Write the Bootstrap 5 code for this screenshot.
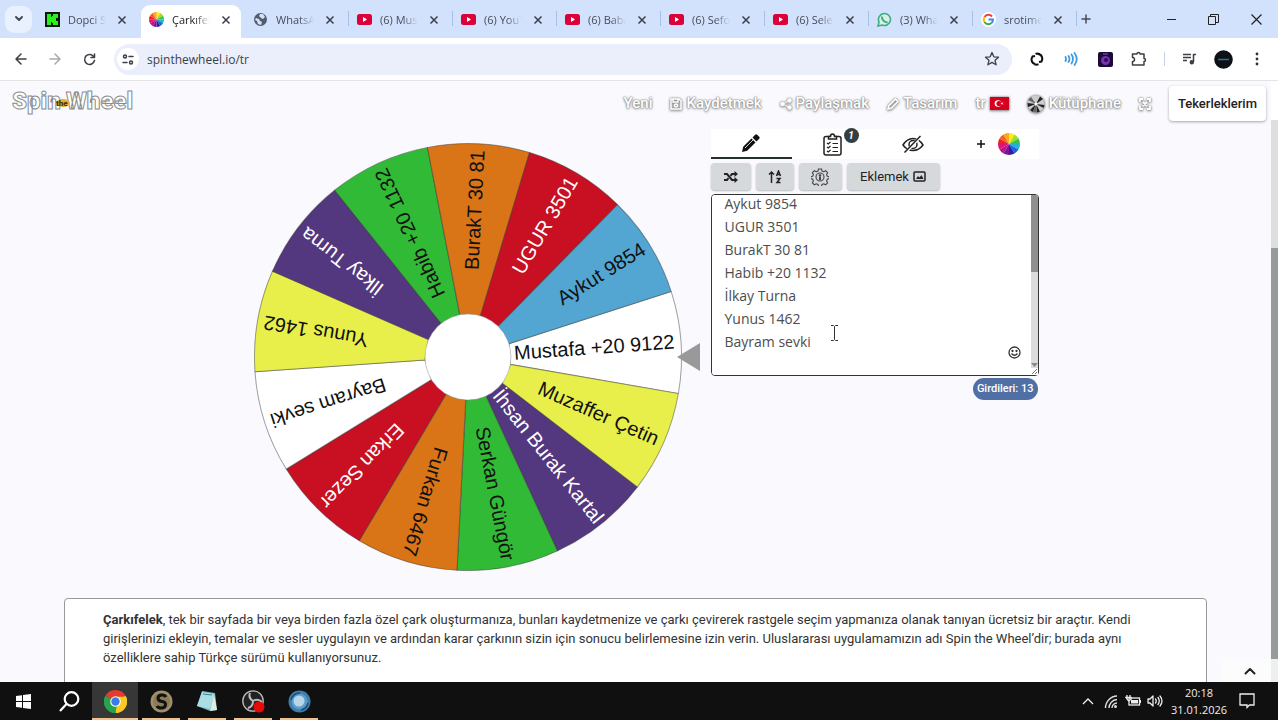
<!DOCTYPE html>
<html lang="tr">
<head>
<meta charset="utf-8">
<meta name="viewport" content="width=device-width, initial-scale=1">
<title>Çarkıfelek</title>
<link href="https://cdn.jsdelivr.net/npm/bootstrap@5.3.0/dist/css/bootstrap.min.css" rel="stylesheet">
<style>
body{font-family:Roboto,sans-serif;font-size:13px;color:#222;background:#f9f9fe}
button{border:0;background:none;padding:0;color:inherit}
a{color:inherit;text-decoration:none}
svg{display:block;flex:none}
.ln{fill:none;stroke:currentColor;stroke-width:1.5;stroke-linecap:round;stroke-linejoin:round}
.tabstrip{height:38px;background:#d3e2fc;font:11px "Open Sans",sans-serif;color:#454b57;flex:none}
.tabmenu{width:27px;height:27px;border-radius:9px;background:#e9f1fe;margin:0 5px}
.tab-item{width:104px;height:33px;padding:0 14px 4px 8px;margin-top:5px;position:relative;flex:0 1 auto}
.tab-item svg.fav{width:15px;height:15px}
.tab-title{width:38px;margin-left:8px;overflow:hidden;white-space:nowrap;-webkit-mask-image:linear-gradient(90deg,#000 60%,transparent);mask-image:linear-gradient(90deg,#000 60%,transparent)}
.tab-item.sep::after{content:"";position:absolute;right:0;top:6px;width:1px;height:15px;background:#a6bfe6}
.tab-item.current{background:#fff;border-radius:9px 9px 0 0;width:100px;margin-right:4px;padding-right:10px;color:#222}
.winbtn{width:43px;height:38px}
.toolbar{height:43px;background:#fff;border-bottom:1px solid #e4e4e4;padding:0 4px;color:#3c3f44;flex:none}
.toolbtn{width:34px;height:34px}
.omni{height:31px;background:#ebeffb;border-radius:16px;margin:0 8px;padding:0 12px 0 3px}
.omni input{border:0;background:none;outline:0;font:12px "Open Sans",sans-serif;color:#3b3f45;padding:0}
.siteinfo{width:22px;height:22px;border-radius:11px;background:#fff;margin:0 8px 0 0}
.pagebar{height:45px;padding:0 5px 0 12px;color:#fff;flex:none}
.pagebar nav{font-size:15px}
.pagebar nav a{font-weight:500;text-shadow:0 0 2px #777,0 1px 3px #999,0 0 1px #888}
.pagebar nav a svg{filter:drop-shadow(0 0 1px #777) drop-shadow(0 1px 1px #aaa)}
.logo-txt{font-family:Roboto,sans-serif;font-weight:900;font-size:24px;fill:#fff;stroke:#8b8b8b;stroke-width:1}
.logo-the{font-weight:900;font-size:8px;fill:#4a3510}
.mywheels{background:#fff;border-radius:4px;height:35px;padding:0 9px;font-size:13px;font-weight:500;color:#222;box-shadow:0 1px 3px #0005;white-space:nowrap}
.stage{padding-left:20px;gap:8px;margin-top:3px}
.wheel{width:450px;margin-top:13px}
.wheel text{font-family:"Liberation Sans",Arial,sans-serif;font-size:20px;text-anchor:end;fill:#111}
.wheel .lt{fill:#fff}
.wheel use{stroke:#3337;stroke-width:1}
.panel{width:328px}
.ptab{height:30px;flex:1 1 0;background:#fff;position:relative}
.ptab.current{border-bottom:2px solid #25302d}
.ptab .cnt{position:absolute;right:14px;top:-1px;width:15px;height:15px;border-radius:8px;background:#343f43;color:#fff;font:italic bold 10px/15px Roboto,sans-serif;text-align:center}
.tbtn{height:27px;background:#d6d9dc;border-radius:4px;box-shadow:0 1px 2px #0004;color:#222}
.entrybox{position:relative;height:182px;margin-top:4px}
.entrybox textarea{display:block;width:100%;height:100%;resize:none;border:1px solid #333;border-radius:4px;outline:0;background:#fff;padding:8px 40px 28px 13px;font:14px/23px "Open Sans",sans-serif;color:#4d4d4d;scrollbar-width:none}
.entrybox textarea::-webkit-scrollbar{display:none}
.vbar{position:absolute;right:1px;top:1px;bottom:1px;width:7px;background:#dcdcdc;border-radius:0 3px 3px 0}
.vbar div{height:77px;background:#8f8f8f;border-radius:0 3px 0 0}
.vbar svg{position:absolute;bottom:0;left:0}
.smile{position:absolute;right:18px;bottom:17px}
.ibeam{position:absolute;left:120px;top:131px}
.total{background:#506fa5;border-radius:11px;height:22px;line-height:22px;padding:0 4px;color:#fff;font-size:11px;font-weight:500;margin:2px 1px 0 0}
.about{margin:26px 64px 0 64px;background:#fff;border:1px solid #999;border-radius:4px;padding:11px 38px 40px;line-height:19px;color:#333}
.pscroll{width:7px;flex:none;background:linear-gradient(#fff 39px,#dcdfde 39px 167px,#959b9a 167px)}
.totop{position:absolute;right:0;bottom:0;width:56px;height:23px;background:#fcfcfcdd;border-radius:6px 0 0 0}
.taskbar{height:38px;background:#101010;color:#eee;flex:none}
.task{width:46px;height:38px;position:relative}
.task.open::after{content:"";position:absolute;left:4px;right:4px;bottom:0;height:2px;background:#f0c28e}
.task.front{background:#373737}
.task.front::after{left:0;right:0}
.clock{font:11px/17px "Open Sans",sans-serif;text-align:center;width:60px;white-space:nowrap}
</style>
</head>
<body class="vh-100 d-flex flex-column overflow-hidden">
<svg width="0" height="0" class="position-absolute">
<defs>
<symbol id="x" viewBox="0 0 10 10"><path d="M1.500 1.500l7 7M8.500 1.500l-7 7" fill="none" stroke="#3a3f4a" stroke-width="1.500"/></symbol>
<symbol id="yt" viewBox="0 0 15 15"><rect y="2" width="15" height="11" rx="2.500" fill="#dc0038"/><path d="M6 5l4 2.500-4 2.500z" fill="#fff"/></symbol>
<symbol id="rainbow" viewBox="-10 -10 20 20">
<g id="q"><path d="M0 0L0-10A10 10 0 0 1 5-8.660z" fill="#ffec1c"/><path d="M0 0L5-8.660A10 10 0 0 1 8.660-5z" fill="#a2dc2c"/><path d="M0 0L8.660-5A10 10 0 0 1 10 0z" fill="#39c24c"/><path d="M0 0L10 0A10 10 0 0 1 8.660 5z" fill="#1fb4d8"/><path d="M0 0L8.660 5A10 10 0 0 1 5 8.660z" fill="#1c64d8"/><path d="M0 0L5 8.660A10 10 0 0 1 0 10z" fill="#2e1fa4"/><path d="M0 0L0 10A10 10 0 0 1-5 8.660z" fill="#7a149c"/><path d="M0 0L-5 8.660A10 10 0 0 1-8.660 5z" fill="#b3148c"/><path d="M0 0L-8.660 5A10 10 0 0 1-10 0z" fill="#e01470"/><path d="M0 0L-10 0A10 10 0 0 1-8.660-5z" fill="#e8202c"/><path d="M0 0L-8.660-5A10 10 0 0 1-5-8.660z" fill="#f4611d"/><path d="M0 0L-5-8.660A10 10 0 0 1 0-10z" fill="#fba81b"/></g></symbol>
<path id="wedge" d="M42-10.300L207.300-51.100A213.500 213.500 0 0 1 207.300 51.100L42 10.300z"/>
</defs>
</svg>

<div class="tabstrip d-flex align-items-center">
<button class="tabmenu d-flex align-items-center justify-content-center" aria-label="Sekmeler"><svg width="10" height="8" class="ln" style="stroke-width:2"><path d="M2 2l3 3 3-3"/></svg></button>
<div class="tab-item d-flex align-items-center"><svg class="fav" viewBox="0 0 15 15"><path fill="#0b1a08" d="M0 0h15v15H0z"/><path fill="#2fee1d" d="M2 2h4v3h1V4h1V2h5v4h-2v3h2v4H8v-2H7v-1H6v3H2z"/></svg><span class="tab-title">Dopci S</span><svg class="ms-auto" width="10" height="10"><use href="#x"/></svg></div>
<div class="tab-item current d-flex align-items-center"><svg class="fav"><use href="#rainbow"/></svg><span class="tab-title">Çarkıfel</span><svg class="ms-auto" width="10" height="10"><use href="#x"/></svg></div>
<div class="tab-item sep d-flex align-items-center"><svg class="fav" viewBox="0 0 15 15"><circle cx="7.500" cy="7.500" r="6.500" fill="#555c69"/><path d="M3 6l3 1 1 2 2 1-1 3-3-1-1-3-2-1zM7 2h3l2 3-2 2-2-1-2-2z" fill="#d3e2fc"/></svg><span class="tab-title">WhatsA</span><svg class="ms-auto" width="10" height="10"><use href="#x"/></svg></div>
<div class="tab-item sep d-flex align-items-center"><svg class="fav"><use href="#yt"/></svg><span class="tab-title">(6) Mus</span><svg class="ms-auto" width="10" height="10"><use href="#x"/></svg></div>
<div class="tab-item sep d-flex align-items-center"><svg class="fav"><use href="#yt"/></svg><span class="tab-title">(6) YouT</span><svg class="ms-auto" width="10" height="10"><use href="#x"/></svg></div>
<div class="tab-item sep d-flex align-items-center"><svg class="fav"><use href="#yt"/></svg><span class="tab-title">(6) Baba</span><svg class="ms-auto" width="10" height="10"><use href="#x"/></svg></div>
<div class="tab-item sep d-flex align-items-center"><svg class="fav"><use href="#yt"/></svg><span class="tab-title">(6) Sefo</span><svg class="ms-auto" width="10" height="10"><use href="#x"/></svg></div>
<div class="tab-item sep d-flex align-items-center"><svg class="fav"><use href="#yt"/></svg><span class="tab-title">(6) Sele</span><svg class="ms-auto" width="10" height="10"><use href="#x"/></svg></div>
<div class="tab-item sep d-flex align-items-center"><svg class="fav" viewBox="0 0 15 15"><path d="M1 14l1-4a6 6 0 1 1 3 3z" fill="#d9f0e6" stroke="#3fae86" stroke-width="1.600"/><path d="M5 4.500c-.6 3 3 6.300 5.500 5.500" fill="none" stroke="#3fae86" stroke-width="2"/></svg><span class="tab-title">(3) Wha</span><svg class="ms-auto" width="10" height="10"><use href="#x"/></svg></div>
<div class="tab-item sep d-flex align-items-center"><svg class="fav" viewBox="0 0 15 15"><circle cx="7.500" cy="7.500" r="7.500" fill="#fff"/><g fill="none" stroke-width="2"><path d="M11 4.500A4.600 4.600 0 0 0 3.500 5" stroke="#ea4335"/><path d="M3.500 5a4.600 4.600 0 0 0 0 5" stroke="#fbbc05"/><path d="M3.500 10a4.600 4.600 0 0 0 7 1" stroke="#34a853"/><path d="M10.500 11A4.500 4.500 0 0 0 12 7.500H7.500" stroke="#4285f4"/></g></svg><span class="tab-title">srotime</span><svg class="ms-auto" width="10" height="10"><use href="#x"/></svg></div>
<button class="px-1" aria-label="Yeni sekme"><svg width="10" height="10" class="ln"><path d="M5 1v8M1 5h8"/></svg></button>
<div class="d-flex ms-auto text-dark">
<button class="winbtn d-flex align-items-center justify-content-center" aria-label="Küçült"><svg width="10" height="10"><path d="M1 5.500h9" stroke="#222"/></svg></button>
<button class="winbtn d-flex align-items-center justify-content-center" aria-label="Geri yükle"><svg width="11" height="11" fill="none" stroke="#222"><path d="M.5 2.500h7v8h-7zM2.500 2.500v-2h8v8h-3"/></svg></button>
<button class="winbtn d-flex align-items-center justify-content-center" aria-label="Kapat"><svg width="11" height="11"><path d="M.5.500l10 10M10.500.500l-10 10" stroke="#222" stroke-width="1.200"/></svg></button>
</div>
</div>

<div class="toolbar d-flex align-items-center">
<button class="toolbtn d-grid justify-content-center align-content-center" aria-label="Geri"><svg width="12" height="12" class="ln"><path d="M11 6H1M6 1L1 6l5 5"/></svg></button>
<button class="toolbtn d-grid justify-content-center align-content-center" style="color:#a7a9ad" aria-label="İleri"><svg width="12" height="12" class="ln"><path d="M1 6h10M6 1l5 5-5 5"/></svg></button>
<button class="toolbtn d-grid justify-content-center align-content-center" aria-label="Yenile"><svg width="13" height="13" class="ln"><path d="M11 4A5 5 0 1 0 11.500 7.500M11.500 1v3.500H8"/></svg></button>
<div class="omni d-flex align-items-center flex-grow-1">
<button class="siteinfo d-grid justify-content-center align-content-center" aria-label="Site bilgisi"><svg width="12" height="11" class="ln"><circle cx="3" cy="2.500" r="1.500"/><path d="M7 2.500h4M1 8.500h4"/><circle cx="9" cy="8.500" r="1.500"/></svg></button>
<input class="flex-grow-1" type="text" value="spinthewheel.io/tr" aria-label="Adres">
<button aria-label="Yer işareti"><svg width="16" height="16" viewBox="0 0 16 16" class="ln" style="stroke-width:1.300"><path d="M8 1.500l1.900 4.300 4.600.4-3.500 3 1.100 4.600L8 11.400l-4.100 2.400L5 9.200l-3.500-3 4.600-.4z"/></svg></button>
</div>
<button class="toolbtn d-grid justify-content-center align-content-center" aria-label="Eşitle"><svg width="14" height="14" fill="none" stroke="#111" stroke-width="2"><path d="M8.500 12.300A5.200 5.200 0 0 1 2.500 4.500L5 4M1.800 9.500A5.200 5.200 0 0 0 5 12M5.500 1.900A5.200 5.200 0 0 1 11.500 9.500L9 10M12.200 5A5.200 5.200 0 0 0 9 2"/></svg></button>
<button class="toolbtn d-grid justify-content-center align-content-center" aria-label="Ses"><svg width="14" height="14" fill="none" stroke="#3f9be0" stroke-width="1.800" stroke-linecap="round"><path d="M1.500 5q1 2 0 4M4.500 4q2 3 0 6M7.500 2.500q3 4.500 0 9M10.500 1q4.500 6 0 12"/></svg></button>
<button class="toolbtn d-grid justify-content-center align-content-center" aria-label="Uzantı"><svg width="15" height="15"><rect width="15" height="15" rx="2" fill="#1c0b35"/><circle cx="7.500" cy="8.500" r="4.500" fill="#7a2fb5"/><circle cx="8" cy="8" r="2" fill="#2b0f52"/><path d="M5 2h5" stroke="#8b5bc0"/></svg></button>
<button class="toolbtn d-grid justify-content-center align-content-center" aria-label="Uzantılar"><svg width="16" height="16" class="ln"><path d="M1.500 3H6a1.500 1.500 0 0 1 3 0h4v4.500a1.500 1.500 0 0 1 0 3v3.500H1.500v-3.500a2 2 0 0 0 0-4z"/></svg></button>
<span class="d-flex justify-content-center" style="width:16px"><span style="width:1px;height:14px;background:#c3d2ea"></span></span>
<button class="toolbtn d-grid justify-content-center align-content-center" aria-label="Medya"><svg width="15" height="12" class="ln"><path d="M1 1.500h8M1 4.500h8M1 7.500h4M11.500 9V1.500h2.500" stroke-linecap="butt"/><circle cx="9.800" cy="9.200" r="1.500" fill="currentColor"/></svg></button>
<button class="toolbtn d-grid justify-content-center align-content-center" aria-label="Profil"><svg width="19" height="19"><circle cx="9.500" cy="9.500" r="9.300" fill="#0d1116"/><path d="M4 9.500h11" stroke="#2a7298" stroke-width="1.500"/></svg></button>
<button class="toolbtn d-grid justify-content-center align-content-center" aria-label="Menü"><svg width="4" height="14" fill="#333"><circle cx="2" cy="2" r="1.400"/><circle cx="2" cy="7" r="1.400"/><circle cx="2" cy="12" r="1.400"/></svg></button>
</div>

<div class="d-flex flex-grow-1 overflow-hidden position-relative">
<main class="flex-grow-1 d-flex flex-column overflow-hidden">
<header class="pagebar d-flex align-items-center">
<a href="#" aria-label="Spin the Wheel"><svg width="124" height="32"><text class="logo-txt" x="0" y="21">Spin</text><text class="logo-txt" x="54" y="21">Wheel</text><ellipse cx="51" cy="15" rx="7" ry="4" fill="#e5ae35"/><text class="logo-the" x="44" y="18">the</text></svg></a>
<nav class="d-flex align-items-center ms-auto" style="gap:18px">
<a href="#">Yeni</a>
<a href="#" class="d-flex align-items-center gap-1"><svg width="12" height="12" fill="none" stroke="#fff" stroke-width="1.500"><path d="M1 1h8l2 2v8H1zM3 1v3h5V1"/><circle cx="6" cy="7.500" r="1.500"/></svg>Kaydetmek</a>
<a href="#" class="d-flex align-items-center gap-1"><svg width="12" height="12" fill="#fff" stroke="#fff"><path d="M9.500 2.500L3 6l6.500 3.500" fill="none"/><circle cx="9.500" cy="2.500" r="1.800"/><circle cx="2.500" cy="6" r="1.800"/><circle cx="9.500" cy="9.500" r="1.800"/></svg>Paylaşmak</a>
<a href="#" class="d-flex align-items-center gap-1"><svg width="12" height="12" fill="none" stroke="#fff" stroke-width="1.500"><path d="M1 11l1-3.500L8.500 1 11 3.500 4.500 10z"/></svg>Tasarım</a>
<a href="#" class="d-flex align-items-center gap-1">tr <svg width="19" height="13"><path fill="#d5001f" d="M0 0h19v13H0z"/><circle cx="8" cy="6.500" r="3.300" fill="#fff"/><circle cx="9" cy="6.500" r="2.600" fill="#d5001f"/><path d="M10.500 6.500l3-1.200-1 1.200 1 1.200z" fill="#fff"/></svg></a>
<a href="#" class="d-flex align-items-center gap-1"><svg width="18" height="18" viewBox="-9 -9 18 18"><circle r="8.500" fill="#ccc"/><path fill="#222" d="M0 0L-8.500-1-8 3zM0 0L-6 6-3 8zM0 0L1 8.500 4 7.500zM0 0L7.500 4 8.500 1zM0 0L7-5 4-7.500z"/><path fill="#666" d="M0 0L-8-4-5-7zM0 0L-3 8 1 8.500z"/><circle r="1.500" fill="#fff"/></svg>Kütüphane</a>
<a href="#" aria-label="Tam ekran"><svg width="12" height="12" fill="none" stroke="#fff" stroke-width="1.800"><path d="M1 4V1h3M8 1h3v3M11 8v3H8M4 11H1V8M4 4l4 4M8 4L4 8"/></svg></a>
<button class="mywheels">Tekerleklerim</button>
</nav>
</header>

<section class="stage d-flex justify-content-center align-items-start">
<svg class="wheel" viewBox="-215 -215 450 430" role="img" aria-label="Çark">
<g transform="rotate(-4)"><use href="#wedge" fill="#fff"/><text x="207" y="6">Mustafa +20 9122</text></g>
<g transform="rotate(23.700)"><use href="#wedge" fill="#e8ef4b"/><text x="207" y="6">Muzaffer Çetin</text></g>
<g transform="rotate(51.400)"><use href="#wedge" fill="#53377f"/><text x="210" y="6" class="lt">İhsan Burak Kartal</text></g>
<g transform="rotate(79.100)"><use href="#wedge" fill="#31ba35"/><text x="207" y="6">Serkan Güngör</text></g>
<g transform="rotate(106.800)"><use href="#wedge" fill="#d97417"/><text x="207" y="6">Furkan 6467</text></g>
<g transform="rotate(134.500)"><use href="#wedge" fill="#c81022"/><text x="207" y="6" class="lt">Erkan Sezer</text></g>
<g transform="rotate(162.200)"><use href="#wedge" fill="#fff"/><text x="207" y="6">Bayram sevki</text></g>
<g transform="rotate(189.900)"><use href="#wedge" fill="#e8ef4b"/><text x="207" y="6">Yunus 1462</text></g>
<g transform="rotate(217.500)"><use href="#wedge" fill="#53377f"/><text x="207" y="6" class="lt">İlkay Turna</text></g>
<g transform="rotate(245.200)"><use href="#wedge" fill="#31ba35"/><text x="207" y="6">Habib +20 1132</text></g>
<g transform="rotate(272.900)"><use href="#wedge" fill="#d97417"/><text x="207" y="6">BurakT 30 81</text></g>
<g transform="rotate(300.600)"><use href="#wedge" fill="#c81022"/><text x="207" y="6" class="lt">UGUR 3501</text></g>
<g transform="rotate(328.300)"><use href="#wedge" fill="#53a6d1"/><text x="207" y="6">Aykut 9854</text></g>
<circle r="43" fill="#fff" stroke="#999" stroke-width=".5"/>
<path d="M209 0l23-14v28z" fill="#999"/>
</svg>
<div class="panel">
<div class="d-flex mb-1">
<button class="ptab current d-flex justify-content-center align-items-center" aria-label="Düzenle"><svg width="18" height="18" viewBox="0 0 18 18" fill="#111"><path d="M0 18l1.200-5.200L9.500 4.500 13.500 8.500 5.200 16.800zM10.500 3.500L13.200.8q1-1 2 0l2 2q1 1 0 2L14.500 7.500z"/><path d="M3 14l8-8" stroke="#fff" stroke-width=".8"/></svg></button>
<button class="ptab d-flex justify-content-center align-items-center" aria-label="Liste"><svg width="19" height="23" viewBox="0 0 19 23" fill="none" stroke="#222" stroke-width="1.500"><rect x="1" y="3.500" width="17" height="18.500" rx="2"/><path d="M5.500 6V3.500h2q0-2.500 2-2.500t2 2.500h2V6z" fill="#fff"/><path d="M4 10l1.300 1L7.500 9M4 14l1.300 1L7.500 13M4 18l1.300 1L7.500 17M9.500 10.500H15M9.500 14.500H15M9.500 18.500H15" stroke-width="1.200"/></svg><span class="cnt">1</span></button>
<button class="ptab d-flex justify-content-center align-items-center" aria-label="Gizle"><svg width="22" height="19" viewBox="0 0 22 19" fill="none" stroke="#222" stroke-width="1.500"><path d="M1 10Q5 3.500 11 3.500T21 10Q17 15.500 11 15.500T1 10z"/><circle cx="11" cy="9.500" r="4"/><path d="M3 18L19 1" stroke="#fff" stroke-width="3"/><path d="M2.500 17.500L18.500 1"/></svg></button>
<button class="ptab d-flex justify-content-center align-items-center ps-1" style="gap:12px" aria-label="Çark ekle"><svg width="10" height="10"><path d="M5 1v8M1 5h8" stroke="#111" stroke-width="1.500"/></svg><svg width="22" height="22"><use href="#rainbow"/></svg></button>
</div>
<div class="d-flex" style="gap:5px">
<button class="tbtn d-flex justify-content-center align-items-center" style="width:40px" aria-label="Karıştır"><svg width="14" height="12" viewBox="0 0 14 12" fill="none" stroke="#222" stroke-width="2"><path d="M0 3h3l5 6h3M0 9h3l1.500-1.800M6.500 4.800L8 3h3"/><path d="M10.500 0l3.500 3-3.500 3zM10.500 6l3.500 3-3.500 3z" fill="#222" stroke="none"/></svg></button>
<button class="tbtn d-flex justify-content-center align-items-center" style="width:38px" aria-label="Sırala"><svg width="14" height="14"><path d="M3.500 13V2M1 4.500L3.500 2 6 4.500" fill="none" stroke="#222" stroke-width="1.500"/><path d="M8.500 6L10.500 1l2 5M9 4.500h3M8.500 8.500h3.500l-3 4h3.500" fill="none" stroke="#222" stroke-width="1.500"/></svg></button>
<button class="tbtn d-flex justify-content-center align-items-center" style="width:43px" aria-label="Ayarlar"><svg width="18" height="18" viewBox="-9 -9 18 18" fill="none" stroke="#444" stroke-width="1.100"><path d="M-1.500-8h3l.5 2 1.800.7 1.800-1 2 2-1 1.800.7 1.800 2 .2v2l-2 .7-.7 1.800 1 1.800-2 2-1.800-1-1.800.7-.5 2h-3l-.5-2-1.800-.7-1.800 1-2-2 1-1.800-.7-1.800-2-.7v-2l2-.2.7-1.800-1-1.800 2-2 1.800 1 1.800-.7z"/><circle r="4"/><circle cy="-1.500" r=".8" fill="#333"/><path d="M0 0v3" stroke-width="2"/></svg></button>
<button class="tbtn d-flex justify-content-center align-items-center gap-1" style="width:93px">Eklemek <svg width="13" height="11" fill="none" stroke="#222" stroke-width="1.500"><rect x="1" y="1" width="11" height="9" rx="1"/><path d="M3 8l2-3 1.500 1.500L8.500 4 10.500 8z" fill="#222" stroke="none"/></svg></button>
</div>
<div class="entrybox">
<textarea id="entries" aria-label="Girdiler" spellcheck="false">Aykut 9854
UGUR 3501
BurakT 30 81
Habib +20 1132
İlkay Turna
Yunus 1462
Bayram sevki</textarea>
<div class="vbar"><div></div><svg width="7" height="14"><path d="M0 2h7L3.500 6z" fill="#888"/><path d="M0 7h7v7H0z" fill="#fff"/><path d="M1 13l5-5M4 13l2-2" stroke="#777"/></svg></div>
<svg class="smile" width="13" height="13" fill="none" stroke="#333" stroke-width="1.300"><circle cx="6.500" cy="6.500" r="5.500"/><path d="M3.500 7.500q3 3.500 6 0"/><circle cx="4.500" cy="5" r=".5" fill="#333"/><circle cx="8.500" cy="5" r=".5" fill="#333"/></svg>
<svg class="ibeam" width="7" height="16" fill="none" stroke="#333"><path d="M0 .500h2.500l1 1 1-1H7M0 15.500h2.500l1-1 1 1H7M3.500 1.500v13"/></svg>
</div>
<div class="d-flex justify-content-end"><span class="total">Girdileri: 13</span></div>
</div>
</section>

<article class="about"><b>Çarkıfelek</b>, tek bir sayfada bir veya birden fazla özel çark oluşturmanıza, bunları kaydetmenize ve çarkı çevirerek rastgele seçim yapmanıza olanak tanıyan ücretsiz bir araçtır. Kendi girişlerinizi ekleyin, temalar ve sesler uygulayın ve ardından karar çarkının sizin için sonucu belirlemesine izin verin. Uluslararası uygulamamızın adı Spin the Wheel’dir; burada aynı özelliklere sahip Türkçe sürümü kullanıyorsunuz.</article>
</main>
<div class="pscroll"></div>
<button class="totop d-flex align-items-center justify-content-center" aria-label="Yukarı"><svg width="12" height="8" class="ln" style="stroke-width:2"><path d="M1.500 6.500L6 2l4.500 4.500"/></svg></button>
</div>

<footer class="taskbar d-flex align-items-center">
<button class="task d-grid justify-content-center align-content-center" aria-label="Başlat"><svg width="15" height="15" fill="#fff"><path d="M0 2l6-.8V7H0zM7 1l8-1v7H7zM0 8h6v5.800L0 13zM7 8h8v7l-8-1z"/></svg></button>
<button class="task d-grid justify-content-center align-content-center" aria-label="Ara"><svg width="21" height="21" fill="none" stroke="#fff" stroke-width="2.200"><circle cx="12.500" cy="8" r="6.800"/><path d="M7.500 13L1 20"/></svg></button>
<button class="task open front d-grid justify-content-center align-content-center" aria-label="Chrome"><svg width="23" height="23" viewBox="-12 -12 24 24"><path fill="#e33b2e" d="M0 0L-10.400-6A12 12 0 0 1 10.400-6z"/><path fill="#f9c923" d="M0 0L10.400-6A12 12 0 0 1 0 12z"/><path fill="#28a34c" d="M0 0L0 12A12 12 0 0 1-10.400-6z"/><path fill="#f9c923" d="M0-5h11A12 12 0 0 1 0 12L5 3z"/><path fill="#28a34c" d="M-10.400-6l6 8.500L0 5l2 0-4 7A12 12 0 0 1-10.400-6z"/><circle r="5.500" fill="#fff"/><circle r="4.400" fill="#3b7de8"/></svg></button>
<button class="task open d-grid justify-content-center align-content-center" aria-label="S"><svg width="23" height="23"><circle cx="11.500" cy="11.500" r="11" fill="#a08f68"/><circle cx="11.500" cy="11.500" r="8.500" fill="#8b7b58"/><path d="M16 7q-1-2-4-2-4 0-4 3t4 3.500 3.500 3.500-4 3-4.500-2" fill="none" stroke="#111" stroke-width="3"/></svg></button>
<button class="task open d-grid justify-content-center align-content-center" aria-label="Not Defteri"><svg width="22" height="20"><path d="M6 0l13 2 2 17-7 1L1 15z" fill="#6fb9c4"/><path d="M6 1l12 2-4 15L1 15z" fill="#a9dfe4"/><path d="M18 3l3 16-7 1z" fill="#e4ecdf"/><path d="M7 3l9 1" stroke="#457f88"/></svg></button>
<button class="task open d-grid justify-content-center align-content-center" aria-label="OBS"><svg width="23" height="23"><circle cx="11" cy="11" r="10.200" fill="#222" stroke="#bbb" stroke-width="1.300"/><path d="M11 11Q6 8 8 3M11 11q5-3 9 1M11 11q0 6-5 7" fill="none" stroke="#bbb" stroke-width="2"/><circle cx="17" cy="17" r="5.500" fill="#e70a0a"/></svg></button>
<button class="task open d-grid justify-content-center align-content-center" aria-label="Uygulama"><svg width="23" height="23"><circle cx="11.500" cy="11.500" r="11" fill="#3a7fae"/><circle cx="11.500" cy="11.500" r="8" fill="#5d9cc8"/><circle cx="11" cy="11" r="5.500" fill="#b9d5ea"/><path d="M3 10a9 9 0 0 1 9-7M20 13a9 9 0 0 1-7 7" fill="none" stroke="#1d4c78" stroke-width="1.500"/></svg></button>
<div class="d-flex align-items-center ms-auto" style="gap:6px;padding-right:23px">
<svg class="me-1" width="12" height="8" fill="none" stroke="#eee" stroke-width="1.300"><path d="M1 7l5-5 5 5"/></svg>
<svg width="15" height="13" fill="none" stroke="#ddd" stroke-width="1.400"><path d="M1.500 13A12 12 0 0 1 13 1M5 13A8.500 8.500 0 0 1 13 4.500M8 13a5 5 0 0 1 5-5"/><circle cx="11.500" cy="11.500" r="1.500" fill="#ddd" stroke="none"/></svg>
<svg width="16" height="12" fill="none" stroke="#eee" stroke-width="1.300"><rect x="4" y="3" width="10.500" height="7"/><path d="M15.500 5v3M2 0v2M5 0v2M1 2.500h5v2L3.500 6z" /><path d="M6 5h7v3.500H6z" fill="#eee" stroke="none"/></svg>
<svg width="16" height="12" class="ln" style="stroke-width:1.300"><path d="M1 4v4h2l3 3V1L3 4zM8.500 4q1.500 2 0 4M11 2.500q2.500 3.500 0 7M13 1q4 5 0 10"/></svg>
<div class="clock">20:18<br>31.01.2026</div>
<button class="ms-1" aria-label="Bildirimler"><svg width="16" height="16" fill="none" stroke="#eee" stroke-width="1.300"><path d="M1 1h14v11h-4.500L8 14.500V12H1z"/></svg></button>
</div>
</footer>
<script src="https://cdn.jsdelivr.net/npm/bootstrap@5.3.0/dist/js/bootstrap.bundle.min.js"></script>
<script>
document.getElementById('entries').scrollTop = 11;
</script>
</body>
</html>
